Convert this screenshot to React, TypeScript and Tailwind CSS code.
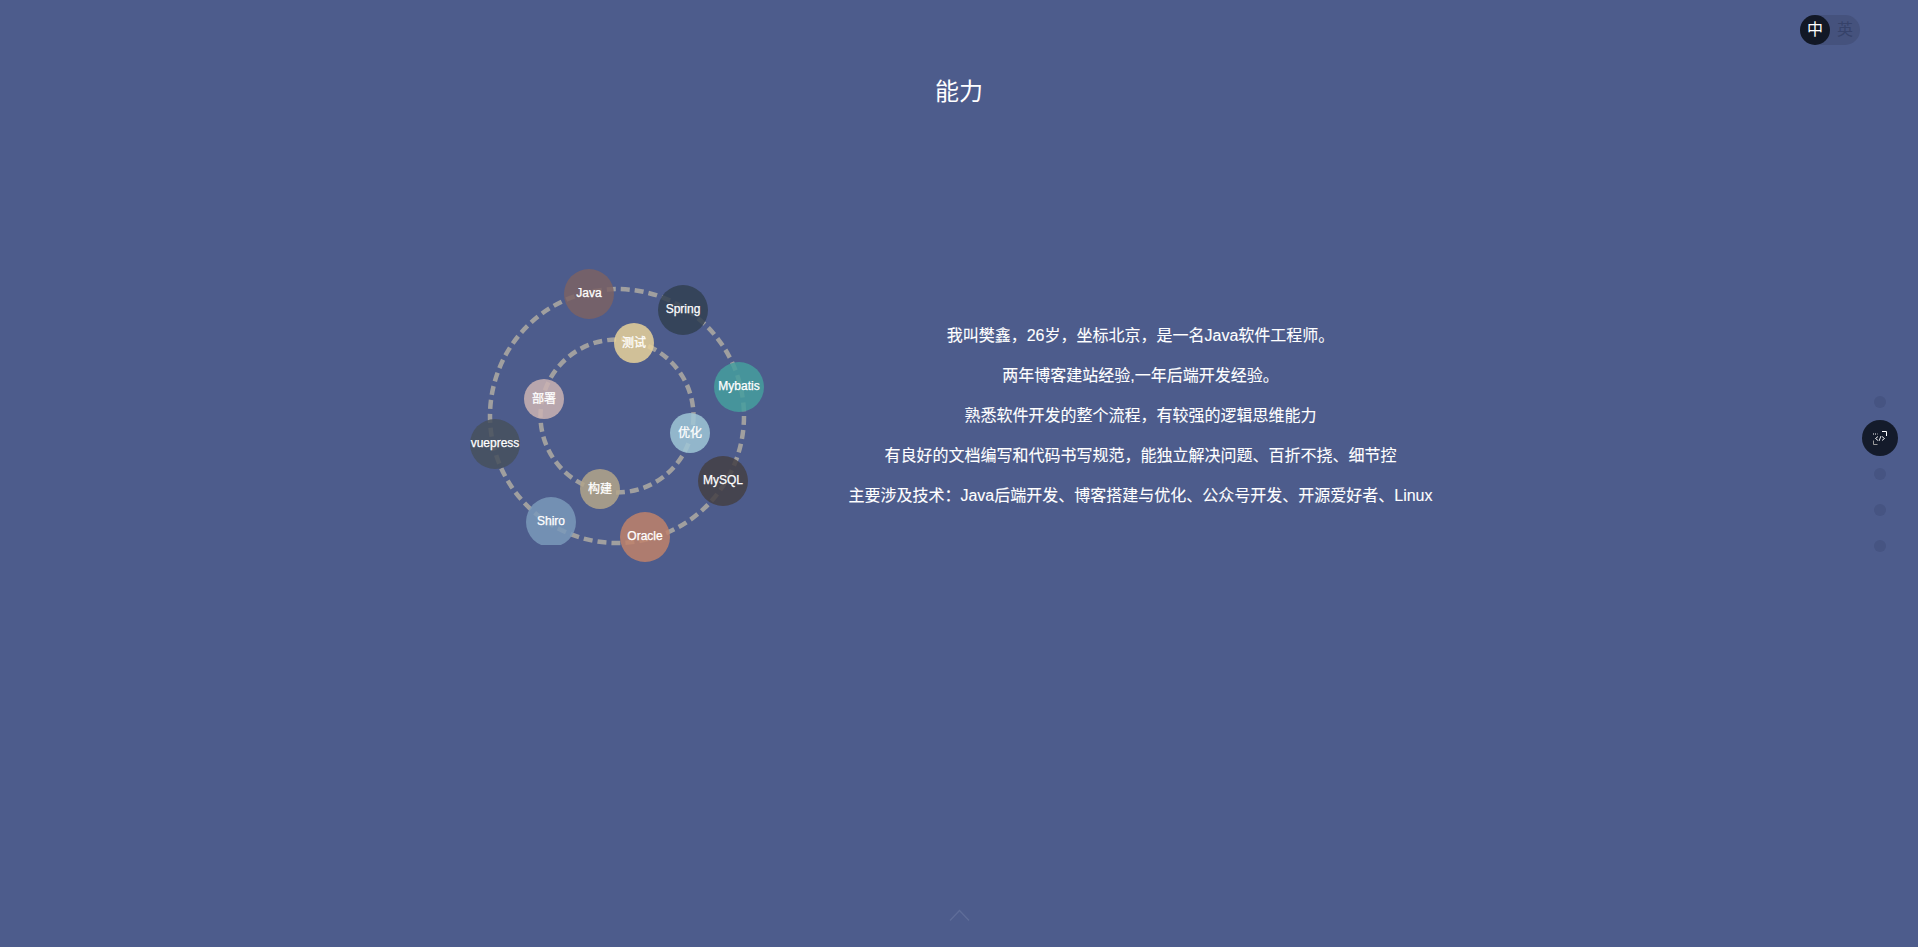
const bubbles = [
  { label: "Java", x: 589, y: 294, big: true, color: "bg-[#7b6164]/85" },
  { label: "Spring", x: 683, y: 310, big: true, color: "bg-[#313f51]/85" },
  { label: "Mybatis", x: 739, y: 387, big: true, color: "bg-[#459e9e]/85" },
  { label: "MySQL", x: 723, y: 481, big: true, color: "bg-[#444044]/85" },
  { label: "Oracle", x: 645, y: 537, big: true, color: "bg-[#bf816a]/85" },
  { label: "Shiro", x: 551, y: 522, big: true, color: "bg-[#7a99ba]/85 [clip-path:inset(0_0_2px_0)]" },
  { label: "vuepress", x: 495, y: 444, big: true, color: "bg-[#47505d]/85" },
  { label: "测试", x: 634, y: 343, big: false, color: "bg-[#e7d19a]/85" },
  { label: "优化", x: 690, y: 433, big: false, color: "bg-[#9fc5d6]/85" },
  { label: "构建", x: 600, y: 489, big: false, color: "bg-[#b3a48a]/85" },
  { label: "部署", x: 544, y: 399, big: false, color: "bg-[#cbb3b3]/85" },
];

const lines = [
  "我叫樊鑫，26岁，坐标北京，是一名Java软件工程师。",
  "两年博客建站经验,一年后端开发经验。",
  "熟悉软件开发的整个流程，有较强的逻辑思维能力",
  "有良好的文档编写和代码书写规范，能独立解决问题、百折不挠、细节控",
  "主要涉及技术：Java后端开发、博客搭建与优化、公众号开发、开源爱好者、Linux",
];

const font = "font-['Liberation_Sans','Noto_Sans_CJK_SC',sans-serif]";

const Orbit = () => (
  <div className="relative w-[340px] h-[340px] shrink-0">
    <svg className="absolute inset-0" width="340" height="340" viewBox="0 0 340 340" fill="none">
      <circle cx="170" cy="170" r="127" stroke="#a09f9f" strokeWidth="4.5" strokeDasharray="9 5" />
      <circle cx="170" cy="170" r="76.5" stroke="#a09f9f" strokeWidth="4.5" strokeDasharray="9 5" />
    </svg>
    {bubbles.map((b) => (
      <div
        key={b.label}
        className={`absolute flex items-center justify-center rounded-full text-white text-xs [-webkit-text-stroke:0.25px_white] -translate-x-1/2 -translate-y-1/2 ${b.color} ${
          b.big ? "w-[50px] h-[50px] pb-[2px]" : "w-[40px] h-[40px]"
        }`}
        style={{ left: b.x - 447, top: b.y - 246 }}>
        {b.label}
      </div>
    ))}
  </div>
);

export default function App() {
  return (
    <div className={`relative h-[947px] overflow-hidden bg-[#4d5c8c] ${font}`}>
      <h1 className="pt-[75px] text-center text-2xl leading-[34px] font-normal text-white">能力</h1>

      <div className="flex mt-[137px] pl-[447px]">
        <Orbit />
        <div className="ml-[61px] w-[585px] pt-[78px] text-center text-white text-base leading-6 [-webkit-text-stroke:0.1px_white]">
          {lines.map((line) => (
            <p key={line} className="mb-4 whitespace-nowrap">
              {line}
            </p>
          ))}
        </div>
      </div>

      <div className="absolute top-[15px] left-[1800px] flex h-[30px] w-[60px] items-center rounded-full bg-[#45527d] text-base">
        <span className="flex h-[30px] w-[30px] items-center justify-center rounded-full bg-[#121826] text-white">中</span>
        <span className="flex w-[30px] justify-center text-[#36426a]">英</span>
      </div>

      <div className="absolute left-[1862px] top-[396px] flex w-[36px] flex-col items-center">
        <span className="h-3 w-3 rounded-full bg-[#465482]" />
        <span className="mt-[12px] flex h-9 w-9 items-center justify-center rounded-full bg-[#141b2b]">
          <svg width="16" height="16" viewBox="0 0 16 16" fill="none" stroke="#fff" strokeWidth="1">
            <path d="M10 1.500h4.500v4.500" />
            <path d="M1.500 10.500v4h4" stroke="#9a9a9a" />
            <path d="M1 4h4.500" strokeDasharray="1 1" />
            <path d="M6 6.500 3.500 8.500 6 10.500M10 6.500l2.500 2-2.500 2M9 6 7 11" strokeWidth="0.9" />
          </svg>
        </span>
        <span className="mt-[12px] h-3 w-3 rounded-full bg-[#465482]" />
        <span className="mt-[24px] h-3 w-3 rounded-full bg-[#465482]" />
        <span className="mt-[24px] h-3 w-3 rounded-full bg-[#465482]" />
      </div>

      <svg className="absolute left-[949px] top-[909px]" width="21" height="13" viewBox="0 0 21 13" fill="none">
        <path d="M1 11.500 10.500 1.500 20 11.500" stroke="#5f6d99" strokeWidth="1.300" />
      </svg>
    </div>
  );
}
